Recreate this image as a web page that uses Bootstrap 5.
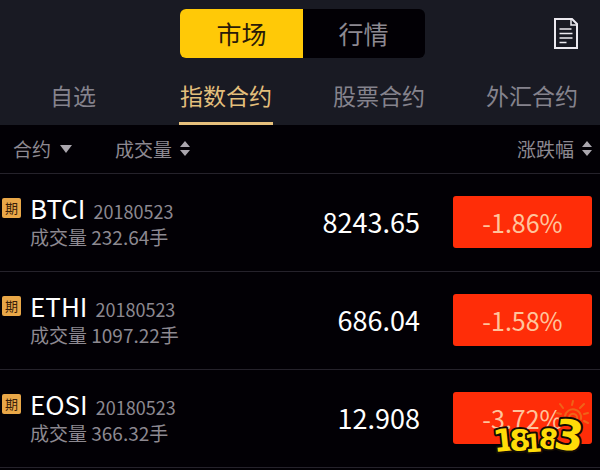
<!DOCTYPE html>
<html lang="zh-CN">
<head>
<meta charset="utf-8">
<meta name="viewport" content="width=device-width, initial-scale=1">
<title>市场</title>
<link href="https://cdn.jsdelivr.net/npm/bootstrap@5.3.0/dist/css/bootstrap.min.css" rel="stylesheet">
<style>
  body { background: #020005; color: #8d8991; font-family: "Noto Sans CJK SC", sans-serif; font-weight: 400; }
  .topbar { background: #191a23; padding: 9px 21px 0 26px; }
  .topbar-row { display: grid; grid-template-columns: 1fr auto 1fr; }
  .switch { grid-column: 2; border-radius: 6px; background: #020005; }
  .switch .btn { width: 123px; height: 49px; padding: 0; border: 0; font-size: 25px; line-height: 49px; color: #8d8991; border-radius: 6px; }
  .switch .btn.active { background: #ffc907; color: #2a1a08; border-radius: 6px 0 0 6px; }
  .tabs { padding-top: 11px; }
  .tabs .nav-link { min-width: 94px; padding: 0; font-size: 23px; line-height: 53px; color: #85838d; text-align: center; border-bottom: 3px solid transparent; }
  .tabs .nav-link.active { color: #e3bf7c; border-color: #e6c07c; }
  .quotes { --bs-table-bg: transparent; --bs-table-color: #8d8991; color: #8d8991; border-color: #25222b; }
  .quotes th, .quotes td { padding: 0; font-weight: 400; }
  .quotes thead th { height: 48px; vertical-align: middle; }
  .quotes tbody td, .quotes tbody th { height: 98px; }
  .sorters { gap: 42px; padding-left: 13px; }
  .sorter { padding: 0; border: 0; background: none; color: #8d8991; font-size: 19px; line-height: 28px; }
  .contract { gap: 9px; padding: 0 0 1px 2px; }
  .kind { width: 19px; height: 20px; margin-top: 4px; background: #e9a748; color: #3a2008; font-size: 13px; line-height: 19px; border-radius: 2px; }
  .code { font-size: 26px; line-height: 28px; color: #fff; }
  .expiry { font-size: 18px; line-height: 28px; }
  .volume { font-size: 19px; line-height: 24px; }
  .price { font-size: 27px; color: #fff; }
  .rate-col { width: 180px; }
  .rate { width: 139px; height: 52px; background: #ff2d08; color: #ffc49c; font-size: 25px; line-height: 52px; border-radius: 3px; }
  .stamp { right: 0; top: 7px; overflow: visible; }
  .stamp text { font-family: "DejaVu Sans", sans-serif; font-weight: 700; fill: #ffdc08; stroke: #120c04; stroke-width: 4px; stroke-linejoin: round; paint-order: stroke; text-anchor: middle; }
</style>
</head>
<body>
<header class="topbar">
  <div class="topbar-row align-items-center">
    <div class="switch btn-group" role="group" aria-label="视图">
      <button type="button" class="btn active">市场</button>
      <button type="button" class="btn">行情</button>
    </div>
    <button type="button" class="btn p-0 border-0 ms-auto lh-1" aria-label="单据">
      <svg width="26" height="33" viewBox="0 0 26 33" fill="none" stroke="#eceaf0" stroke-width="2">
        <path d="M2 2h17l5 5V31H2z"/>
        <path d="M18 2v6h6" stroke-width="1.500"/>
        <path d="M6.500 12h12M6.500 16.500h13M6.500 21h13M6.500 25.500h7" stroke-width="1.600"/>
      </svg>
    </button>
  </div>
  <nav class="tabs nav flex-nowrap justify-content-between">
    <a class="nav-link" href="#">自选</a>
    <a class="nav-link active" aria-current="page" href="#">指数合约</a>
    <a class="nav-link" href="#">股票合约</a>
    <a class="nav-link" href="#">外汇合约</a>
  </nav>
</header>
<main>
  <table class="quotes table align-middle mb-0">
    <thead>
      <tr>
        <th scope="col">
          <div class="sorters d-flex">
            <button type="button" class="sorter d-flex align-items-center gap-2">合约
              <svg width="14" height="8" viewBox="0 0 14 8" fill="#aaa6ae"><path d="M1 0h12L7 8z"/></svg></button>
            <button type="button" class="sorter d-flex align-items-center gap-2">成交量
              <svg width="10" height="15" viewBox="0 0 10 15" fill="#aaa6ae"><path d="M5 0l5 6H0zM0 9h10l-5 6z"/></svg></button>
          </div>
        </th>
        <th scope="col" aria-label="价格"></th>
        <th scope="col" class="rate-col">
          <button type="button" class="sorter d-flex align-items-center gap-2 ms-auto me-2">涨跌幅
            <svg width="10" height="15" viewBox="0 0 10 15" fill="#aaa6ae"><path d="M5 0l5 6H0zM0 9h10l-5 6z"/></svg></button>
        </th>
      </tr>
    </thead>
    <tbody>
      <tr>
        <th scope="row"><div class="contract d-flex"><span class="kind text-center">期</span>
          <div><div class="d-flex align-items-baseline gap-2"><span class="code">BTCI</span><span class="expiry">20180523</span></div>
          <div class="volume">成交量 232.64手</div></div></div></th>
        <td class="price text-end">8243.65</td>
        <td><div class="rate text-center ms-auto me-2">-1.86%</div></td>
      </tr>
      <tr>
        <th scope="row"><div class="contract d-flex"><span class="kind text-center">期</span>
          <div><div class="d-flex align-items-baseline gap-2"><span class="code">ETHI</span><span class="expiry">20180523</span></div>
          <div class="volume">成交量 1097.22手</div></div></div></th>
        <td class="price text-end">686.04</td>
        <td><div class="rate text-center ms-auto me-2">-1.58%</div></td>
      </tr>
      <tr>
        <th scope="row"><div class="contract d-flex"><span class="kind text-center">期</span>
          <div><div class="d-flex align-items-baseline gap-2"><span class="code">EOSI</span><span class="expiry">20180523</span></div>
          <div class="volume">成交量 366.32手</div></div></div></th>
        <td class="price text-end">12.908</td>
        <td><div class="rate text-center ms-auto me-2 position-relative">-3.72%
          <svg class="stamp position-absolute" width="104" height="68" viewBox="0 0 104 68" role="img" aria-label="18183">
            <g fill="none" stroke="#e87a20" stroke-width="2" stroke-linecap="round" opacity=".7">
              <path d="M77 17a8 8 0 0 1 16 3M81 18a4 4 0 0 1 8 2M75 9l-3-4M84 6l1-4M92 9l4-4M96 15l4-1M96 22l4 2M73 15l-4-1"/>
            </g>
            <text x="17" y="52" font-size="31" transform="rotate(-6 17 52)">1</text>
            <text x="32" y="52" font-size="31">8</text>
            <text x="60" y="50" font-size="28" transform="rotate(4 60 50)">8</text>
            <text x="46" y="53" font-size="25" transform="rotate(-4 46 53)">1</text>
            <text x="79" y="51" font-size="42" transform="rotate(8 79 51)">3</text>
          </svg>
        </div></td>
      </tr>
    </tbody>
  </table>
</main>
<script src="https://cdn.jsdelivr.net/npm/bootstrap@5.3.0/dist/js/bootstrap.bundle.min.js"></script>
</body>
</html>
